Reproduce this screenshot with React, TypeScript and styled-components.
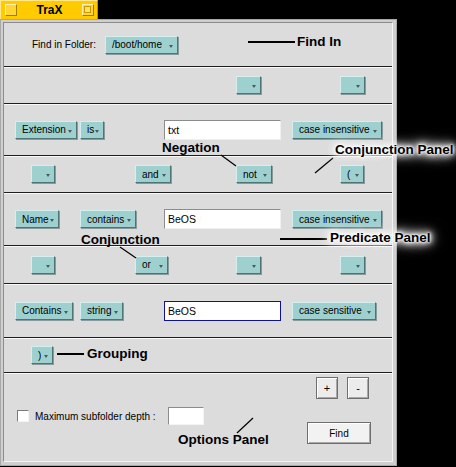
import React from 'react'
import styled, { createGlobalStyle } from 'styled-components'

const GlobalStyle = createGlobalStyle`
  html, body {
    margin: 0;
    padding: 0;
    background: #000;
  }
  body {
    font-family: "Liberation Sans", Arial, sans-serif;
  }
`

const Page = styled.div`
  position: relative;
  width: 456px;
  height: 467px;
  background: #000;
  overflow: hidden;
`

const TitleTab = styled.div`
  position: relative;
  display: flex;
  align-items: center;
  box-sizing: border-box;
  width: 98px;
  height: 19px;
  padding: 0 3px 0 4px;
  background: #ffcb00;
  border-top: 1px solid #ffe98a;
  border-left: 1px solid #ffe98a;
  border-right: 1px solid #b89000;
`

const CloseBox = styled.div`
  box-sizing: border-box;
  width: 12px;
  height: 12px;
  background: #ffd633;
  border: 1px solid;
  border-color: #fff2b0 #a07c00 #a07c00 #fff2b0;
`

const Title = styled.div`
  flex: 1;
  text-align: center;
  font-size: 12px;
  font-weight: bold;
  color: #000;
`

const ZoomBox = styled.div`
  position: relative;
  box-sizing: border-box;
  width: 12px;
  height: 12px;
  border: 1px solid;
  border-color: #fff2b0 #a07c00 #a07c00 #fff2b0;
  background: #ffd633;

  &::after {
    content: '';
    position: absolute;
    left: 1px;
    top: 1px;
    width: 5px;
    height: 5px;
    border: 1px solid #c89a00;
    background: #ffe066;
  }
`

const Window = styled.div`
  box-sizing: border-box;
  width: 397px;
  height: 447px;
  border: 1px solid #a8a8a8;
  background: #cfcfcf;
  padding: 2px 3px 3px 2px;
`

const Content = styled.div`
  display: flex;
  flex-direction: column;
  box-sizing: border-box;
  height: 100%;
  background: #dcdcdc;
  border: 1px solid;
  border-color: #8c8c8c #f4f4f4 #f4f4f4 #8c8c8c;
`

const Section = styled.div<{ $h: number }>`
  box-sizing: border-box;
  height: ${p => p.$h}px;
  flex: none;
  display: flex;
  align-items: center;
  border-bottom: 1px solid #1e1e1e;
  box-shadow: 0 1px 0 #f8f8f8;
`

const FolderRow = styled.div`
  display: flex;
  align-items: center;
  padding-left: 28px;
  gap: 9px;
`

const PredicateGrid = styled.div`
  display: grid;
  grid-template-columns: 65px 84px 128px auto;
  align-items: center;
  padding-left: 11px;
`

const ConjunctionGrid = styled.div`
  display: grid;
  grid-template-columns: 104px 101px 104px auto;
  align-items: center;
  padding-left: 27px;
`

const Label = styled.span`
  font-size: 10px;
  color: #000;
  white-space: nowrap;
`

const MenuField = styled.div<{ $w: number }>`
  position: relative;
  box-sizing: border-box;
  width: ${p => p.$w}px;
  height: 18px;
  padding-left: 6px;
  display: flex;
  align-items: center;
  background: #9fd0d0;
  border: 1px solid;
  border-color: #d6eeee #4f7474 #4f7474 #d6eeee;
  box-shadow: 1px 1px 0 #8a9a9a;
  font-size: 10px;
  color: #000;
  white-space: nowrap;

  &::after {
    content: '';
    position: absolute;
    right: 4px;
    top: 8px;
    border-left: 2px solid transparent;
    border-right: 2px solid transparent;
    border-top: 3px solid #4a5a5a;
  }
`

const TextField = styled.div<{ $focused?: boolean }>`
  box-sizing: border-box;
  width: 117px;
  height: 20px;
  padding-left: 3px;
  display: flex;
  align-items: center;
  background: #fff;
  border: 1px solid;
  border-color: ${p => (p.$focused ? '#1010a0' : '#8c8c8c #f0f0f0 #f0f0f0 #8c8c8c')};
  font-size: 10.5px;
  color: #000;
`

const Options = styled.div`
  flex: 1;
  display: grid;
  grid-template-columns: 1fr 64px;
  padding: 4px 21px 0 13px;
`

const DepthRow = styled.div`
  display: flex;
  align-items: center;
  margin-top: 30px;
  height: 18px;
`

const CheckBox = styled.div`
  box-sizing: border-box;
  width: 12px;
  height: 12px;
  margin-right: 6px;
  background: #fff;
  border: 1px solid;
  border-color: #7c7c7c #f4f4f4 #f4f4f4 #7c7c7c;
`

const DepthField = styled.div`
  box-sizing: border-box;
  width: 36px;
  height: 18px;
  margin-left: 12px;
  background: #fff;
  border: 1px solid;
  border-color: #8c8c8c #f4f4f4 #f4f4f4 #8c8c8c;
`

const ButtonColumn = styled.div`
  display: flex;
  flex-direction: column;
  align-items: flex-end;
`

const StepRow = styled.div`
  display: flex;
  gap: 9px;
  margin-right: 2px;
`

const PushButton = styled.div<{ $w: number }>`
  box-sizing: border-box;
  width: ${p => p.$w}px;
  height: 22px;
  display: flex;
  align-items: center;
  justify-content: center;
  background: #ececec;
  border: 1px solid #6e6e6e;
  box-shadow: inset 1px 1px 0 #fff, inset -1px -1px 0 #a8a8a8;
  font-size: 11px;
  color: #000;
`

const FindButton = styled(PushButton)`
  margin-top: 23px;
  background: #f2f2f2;
  font-size: 10px;
`

const Callout = styled.div<{ $x: number; $y: number; $glow?: boolean }>`
  position: absolute;
  left: ${p => p.$x}px;
  top: ${p => p.$y}px;
  font-size: 13.5px;
  line-height: 14px;
  font-weight: bold;
  color: #000;
  white-space: nowrap;
  text-shadow: ${p =>
    p.$glow
      ? '0 0 2px #fff, 0 0 3px #fff, 0 0 5px #fff, 0 0 7px #fff, 0 0 9px #fff, 0 0 12px #fff, 0 0 15px #fff, 0 0 18px #fff'
      : 'none'};
`

const Leaders = styled.svg`
  position: absolute;
  left: 0;
  top: 0;
  pointer-events: none;
`

type Field = { text?: string; w: number } | null

const predicates: { fields: Field[]; value: string; focused?: boolean; caseText: string; caseW: number; h: number }[] = [
  { fields: [{ text: 'Extension', w: 62 }, { text: 'is', w: 24 }], value: 'txt', caseText: 'case insensitive', caseW: 90, h: 52 },
  { fields: [{ text: 'Name', w: 44 }, { text: 'contains', w: 56 }], value: 'BeOS', caseText: 'case insensitive', caseW: 90, h: 53 },
  { fields: [{ text: 'Contains', w: 58 }, { text: 'string', w: 43 }], value: 'BeOS', focused: true, caseText: 'case sensitive', caseW: 84, h: 54 }
]

const conjunctions: { fields: Field[]; h: number }[] = [
  { fields: [null, null, { w: 25 }, { w: 25 }], h: 37 },
  { fields: [{ w: 24 }, { text: 'and', w: 36 }, { text: 'not', w: 36 }, { text: '(', w: 24 }], h: 37 },
  { fields: [{ w: 24 }, { text: 'or', w: 33 }, { w: 25 }, { w: 25 }], h: 38 }
]

function ConjunctionRow({ fields, h }: { fields: Field[]; h: number }) {
  return (
    <Section $h={h}>
      <ConjunctionGrid>
        {fields.map((f, i) => (f ? <MenuField key={i} $w={f.w}>{f.text}</MenuField> : <span key={i} />))}
      </ConjunctionGrid>
    </Section>
  )
}

function PredicateRow({ p }: { p: (typeof predicates)[number] }) {
  return (
    <Section $h={p.h}>
      <PredicateGrid>
        {p.fields.map((f, i) => (
          <MenuField key={i} $w={f!.w}>
            {f!.text}
          </MenuField>
        ))}
        <TextField $focused={p.focused}>{p.value}</TextField>
        <MenuField $w={p.caseW}>{p.caseText}</MenuField>
      </PredicateGrid>
    </Section>
  )
}

export default function App() {
  return (
    <Page>
      <GlobalStyle />
      <TitleTab>
        <CloseBox />
        <Title>TraX</Title>
        <ZoomBox />
      </TitleTab>
      <Window>
        <Content>
          <Section $h={44}>
            <FolderRow>
              <Label>Find in Folder:</Label>
              <MenuField $w={73}>/boot/home</MenuField>
            </FolderRow>
          </Section>
          <ConjunctionRow {...conjunctions[0]} />
          <PredicateRow p={predicates[0]} />
          <ConjunctionRow {...conjunctions[1]} />
          <PredicateRow p={predicates[1]} />
          <ConjunctionRow {...conjunctions[2]} />
          <PredicateRow p={predicates[2]} />
          <Section $h={35}>
            <ConjunctionGrid>
              <MenuField $w={22}>)</MenuField>
            </ConjunctionGrid>
          </Section>
          <Options>
            <div>
              <DepthRow>
                <CheckBox />
                <Label>Maximum subfolder depth :</Label>
                <DepthField />
              </DepthRow>
            </div>
            <ButtonColumn>
              <StepRow>
                <PushButton $w={22}>+</PushButton>
                <PushButton $w={22}>-</PushButton>
              </StepRow>
              <FindButton $w={64}>Find</FindButton>
            </ButtonColumn>
          </Options>
        </Content>
      </Window>

      <Leaders width={456} height={467} viewBox="0 0 456 467">
        <g stroke="#000" fill="none">
          <line x1={248} y1={42} x2={295} y2={42} strokeWidth={2} />
          <line x1={221} y1={155} x2={236} y2={166} strokeWidth={1.2} />
          <line x1={315} y1={173} x2={333} y2={158} strokeWidth={1.2} />
          <line x1={120} y1={247} x2={136} y2={258} strokeWidth={1.2} />
          <line x1={280} y1={239} x2={327} y2={239} strokeWidth={2} />
          <line x1={57} y1={354} x2={84} y2={354} strokeWidth={2} />
          <line x1={237} y1={433} x2={253} y2={418} strokeWidth={1.2} />
        </g>
      </Leaders>
      <Callout $x={297} $y={35}>Find In</Callout>
      <Callout $x={162} $y={141}>Negation</Callout>
      <Callout $x={335} $y={143} $glow>Conjunction Panel</Callout>
      <Callout $x={81} $y={233}>Conjunction</Callout>
      <Callout $x={330} $y={231} $glow>Predicate Panel</Callout>
      <Callout $x={87} $y={347}>Grouping</Callout>
      <Callout $x={178} $y={433}>Options Panel</Callout>
    </Page>
  )
}
